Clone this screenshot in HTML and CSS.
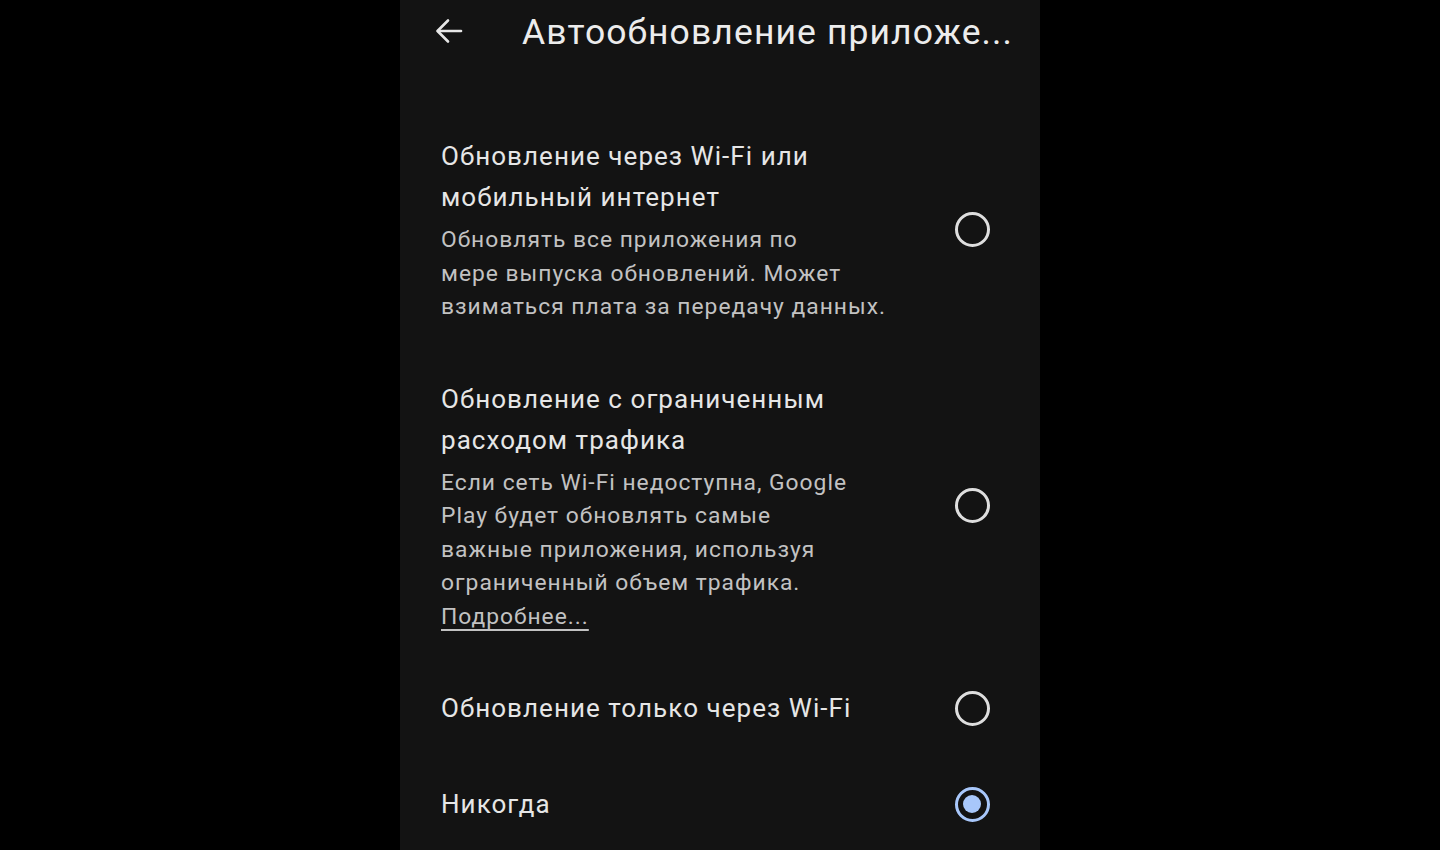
FILE: index.html
```html
<!DOCTYPE html>
<html lang="ru">
<head>
<meta charset="utf-8">
<title>Автообновление приложений</title>
<link rel="stylesheet" href="styles.css">
</head>
<body>
<div class="screen">
  <header class="topbar">
    <span class="back">
      <svg width="28" height="26" viewBox="0 0 28 26" fill="none" stroke="#e6e6e6" stroke-width="2.6" stroke-linecap="round" stroke-linejoin="round">
        <path d="M26 13H3"/>
        <path d="M13 2.5L2.5 13L13 23.5"/>
      </svg>
    </span>
    <h1 class="title">Автообновление приложе...</h1>
  </header>
  <div class="list">
    <div class="item">
      <div class="text">
        <div class="label">Обновление через Wi-Fi или<br>мобильный интернет</div>
        <div class="desc">Обновлять все приложения по<br>мере выпуска обновлений. Может<br>взиматься плата за передачу данных.</div>
      </div>
      <span class="radio"></span>
    </div>
    <div class="item">
      <div class="text">
        <div class="label">Обновление с ограниченным<br>расходом трафика</div>
        <div class="desc">Если сеть Wi-Fi недоступна, Google<br>Play будет обновлять самые<br>важные приложения, используя<br>ограниченный объем трафика.<br><span class="link">Подробнее...</span></div>
      </div>
      <span class="radio"></span>
    </div>
    <div class="item">
      <div class="text">
        <div class="label">Обновление только через Wi-Fi</div>
      </div>
      <span class="radio"></span>
    </div>
    <div class="item">
      <div class="text">
        <div class="label">Никогда</div>
      </div>
      <span class="radio checked"></span>
    </div>
  </div>
</div>
</body>
</html>
```
FILE: styles.css
```css
html, body {
  margin: 0;
  padding: 0;
  background: #000;
  height: 100%;
  overflow: hidden;
}
body {
  font-family: Roboto, "Noto Sans", "DejaVu Sans", sans-serif;
}
.screen {
  width: 640px;
  height: 850px;
  margin: 0 auto;
  background: #131313;
  overflow: hidden;
}
.topbar {
  height: 64px;
  display: flex;
  align-items: center;
  padding-left: 35px;
}
.back {
  display: flex;
  width: 28px;
  height: 26px;
  margin-top: -2px;
}
.title {
  margin: 0 0 0 59px;
  font-size: 35.5px;
  font-weight: 400;
  color: #ececec;
  white-space: nowrap;
  letter-spacing: 1.1px;
}
.list {
  padding-top: 44px;
}
.item {
  display: flex;
  align-items: center;
  justify-content: space-between;
  padding: 28px 50px 27px 41px;
}
.text {
  width: 470px;
}
.label {
  font-size: 26px;
  line-height: 41px;
  color: #e6e6e6;
  letter-spacing: 1.05px;
}
.desc {
  margin-top: 5px;
  font-size: 22.8px;
  line-height: 33.5px;
  color: #c2c2c2;
  letter-spacing: 1px;
}
.link {
  text-decoration: underline;
  text-underline-offset: 5px;
  text-decoration-thickness: 2px;
}
.radio {
  box-sizing: border-box;
  width: 35px;
  height: 35px;
  border: 3.2px solid #dedede;
  border-radius: 50%;
  flex: none;
  position: relative;
}
.radio.checked {
  border-color: #a8c7fa;
}
.radio.checked::after {
  content: "";
  position: absolute;
  left: 5.3px;
  top: 5.3px;
  width: 18px;
  height: 18px;
  border-radius: 50%;
  background: #a8c7fa;
}
```
